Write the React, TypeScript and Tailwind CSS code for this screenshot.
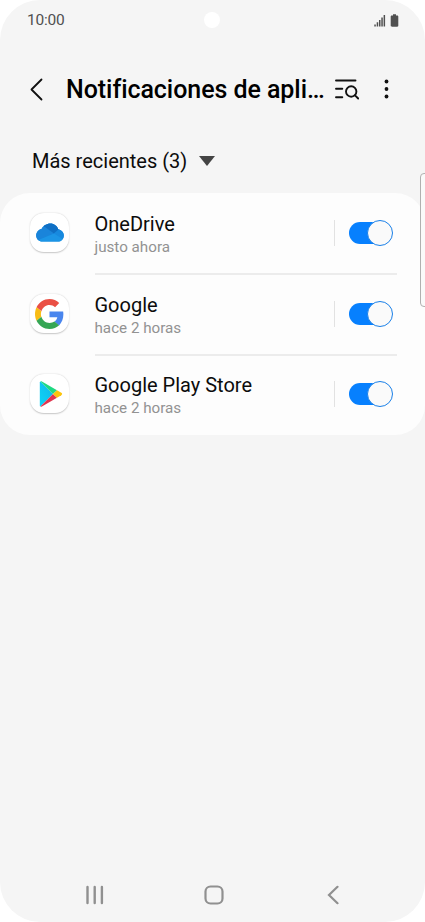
import { useState } from 'react';

interface AppEntry {
  id: string;
  name: string;
  time: string;
  icon: React.ReactNode;
}

function OneDriveIcon() {
  return (
    <svg width="28" height="19" viewBox="0 0 28 19">
      <defs>
        <clipPath id="cloud">
          <path d="M6.300 18.600C2.800 18.600.2 16 .2 12.600.2 9.300 2.500 6.800 5.500 6.100 7 2.600 10.600.4 14.400.4c3.700 0 6.900 2.400 8 6 3 .3 5.400 2.900 5.400 6 0 3.400-2.600 6.200-6 6.200z" />
        </clipPath>
      </defs>
      <g clipPath="url(#cloud)">
        <rect width="28" height="19" fill="#1386dc" />
        <path d="M7 0h17v7l-6.500 4L8 5z" fill="#0f6fc4" />
        <path d="M0 4h9l9 6.500L0 18z" fill="#1a84da" />
        <path d="M17.500 10.800L23 6h6v12z" fill="#1889de" />
        <path d="M1 17.500l17-7 9.500 6V19H1z" fill="#1c95e6" />
      </g>
    </svg>
  );
}

function GoogleIcon() {
  return (
    <svg width="29" height="30" viewBox="0 0 48 48" preserveAspectRatio="none">
      <path fill="#ea5045" d="M24 9.500c3.540 0 6.710 1.220 9.210 3.600l6.850-6.850C35.900 2.380 30.470 0 24 0 14.620 0 6.510 5.380 2.560 13.220l7.980 6.190C12.430 13.720 17.740 9.500 24 9.500z" />
      <path fill="#4a86ee" d="M46.980 24.550c0-1.570-.15-3.090-.38-4.550H24v9.020h12.940c-.58 2.960-2.260 5.480-4.780 7.180l7.730 6c4.510-4.180 7.090-10.360 7.090-17.650z" />
      <path fill="#f8bc15" d="M10.530 28.590c-.48-1.450-.76-2.990-.76-4.590s.27-3.140.76-4.590l-7.980-6.190C.92 16.460 0 20.120 0 24s.92 7.540 2.560 10.780z" />
      <path fill="#36a655" d="M24 48c6.480 0 11.930-2.130 15.890-5.810l-7.730-6c-2.150 1.450-4.920 2.300-8.160 2.300-6.260 0-11.570-4.220-13.470-9.910l-7.980 6.190C6.510 42.620 14.620 48 24 48z" />
    </svg>
  );
}

function PlayStoreIcon() {
  return (
    <svg width="24" height="26" viewBox="0 0 24 26" className="ml-[3px]">
      <defs>
        <linearGradient id="playBlue" x1="1" y1="0" x2="0" y2="1">
          <stop offset="0" stopColor="#12b5e8" />
          <stop offset="1" stopColor="#0cd5f8" />
        </linearGradient>
      </defs>
      <path d="M1.500.4C1 .6.800 1 .8 1.600v22.800c0 .6.200 1 .6 1.200L14 13z" fill="url(#playBlue)" />
      <path d="M1.500.4c.4-.2.900-.1 1.400.2L18 9.200 14 13z" fill="#1fd983" />
      <path d="M1.400 25.600c.4.200.900.1 1.500-.2L18 16.800 14 13z" fill="#e0354f" />
      <path d="M18 9.200l4.300 2.600c1.100.7 1.100 1.700 0 2.400L18 16.800 14 13z" fill="#fcc40c" />
    </svg>
  );
}

const apps: AppEntry[] = [
  { id: 'onedrive', name: 'OneDrive', time: 'justo ahora', icon: <OneDriveIcon /> },
  { id: 'google', name: 'Google', time: 'hace 2 horas', icon: <GoogleIcon /> },
  { id: 'play', name: 'Google Play Store', time: 'hace 2 horas', icon: <PlayStoreIcon /> },
];

function Toggle({ checked, onChange }: { checked: boolean; onChange: () => void }) {
  return (
    <button
      type="button"
      role="switch"
      aria-checked={checked}
      onClick={onChange}
      className="flex h-[26px] w-11 items-center"
    >
      <span
        className={`flex h-[22px] w-[43px] items-center rounded-full ${
          checked ? 'justify-end bg-[#0780fe]' : 'justify-start bg-[#b5b5b5]'
        }`}
      >
        <span
          className={`-mr-px h-[26px] w-[26px] shrink-0 rounded-full border bg-[#fafafa] ${
            checked ? 'border-[#1a80e8]' : 'border-[#b5b5b5]'
          }`}
        />
      </span>
    </button>
  );
}

function StatusBar() {
  return (
    <div className="relative flex h-10 items-center justify-between pl-[27px] pr-[25px] text-[#505050]">
      <span className="pt-[2px] text-[15.500px] leading-none tracking-[-0.2px]">10:00</span>
      <span className="absolute left-[204px] top-3 h-4 w-4 rounded-full bg-white" />
      <svg width="26" height="13" viewBox="0 0 26 13" fill="currentColor">
        <path d="M.3 10.500h1.500V12.500H.3zM2.700 8.300h1.500v4.200H2.700zM5 6h1.500v6.500H5zM7.300 3.500h1.500v9H7.300zM9.600 1h1.500v11.500H9.600z" />
        <path d="M19 .2h3v1.400h1.200c.7 0 1.100.4 1.100 1.100v8.900c0 .8-.4 1.200-1.200 1.200h-5.200c-.8 0-1.200-.4-1.200-1.200V2.700c0-.7.400-1.100 1.100-1.100H19z" />
      </svg>
    </div>
  );
}

export default function App() {
  const [enabled, setEnabled] = useState<Record<string, boolean>>({
    onedrive: true,
    google: true,
    play: true,
  });

  const toggle = (id: string) => {
    setEnabled({ ...enabled, [id]: !enabled[id] });
  };

  return (
    <div className="h-[922px] w-[425px] bg-white font-[Roboto,sans-serif]">
      <div className="relative flex h-full flex-col overflow-hidden rounded-[40px] bg-[#f5f5f5]">
        <StatusBar />

        <header className="mt-[29px] flex h-10 items-center pl-[30px]">
          <button type="button" aria-label="Atrás" className="w-9">
            <svg width="14" height="23" viewBox="0 0 14 23" fill="none" stroke="#111" strokeWidth="1.800" strokeLinecap="round" strokeLinejoin="round">
              <path d="M11.500 1.500L1.500 11.500l10 10" />
            </svg>
          </button>
          <h1 className="w-[268px] whitespace-nowrap pt-[2px] text-[25px] font-medium leading-8 tracking-[-0.06px] text-black">
            Notificaciones de apli…
          </h1>
          <button type="button" aria-label="Buscar">
            <svg width="25" height="21" viewBox="0 0 25 21" fill="none" stroke="#111" strokeWidth="1.900" strokeLinecap="round">
              <path d="M2 1.500h19.500M2 9.800h6.300M2 18.200h6.300" />
              <circle cx="17.200" cy="12.500" r="5.200" />
              <path d="M21 16.300l3.200 3.200" />
            </svg>
          </button>
          <button type="button" aria-label="Más opciones" className="ml-[25px]">
            <svg width="5" height="20" viewBox="0 0 5 20" fill="#111">
              <circle cx="2.500" cy="2.500" r="1.900" />
              <circle cx="2.500" cy="10" r="1.900" />
              <circle cx="2.500" cy="17.500" r="1.900" />
            </svg>
          </button>
        </header>

        <button type="button" className="mt-8 flex h-10 items-center gap-3 pl-8 text-left">
          <span className="text-[20px] leading-6 text-[#0c0c0c]">Más recientes (3)</span>
          <svg width="16" height="10" viewBox="0 0 16 10" fill="#444">
            <path d="M0 0h16L8 10z" />
          </svg>
        </button>

        <main className="mt-3 flex h-[242px] flex-col rounded-[30px] bg-[#fdfdfd] pl-[30px] pr-7 pt-px">
          {apps.map((app, index) => (
            <div key={app.id} className="flex h-[81px] items-stretch last:h-[79px]">
              <div className="flex w-[64.500px] items-center pb-1">
                <div className="flex h-[39px] w-[39px] items-center justify-center rounded-[14px] bg-white shadow-[0_0.500px_1.500px_rgba(0,0,0,0.22)]">
                  {app.icon}
                </div>
              </div>
              <div
                className={`flex flex-1 items-center border-[#ececec] pr-1 ${
                  index < apps.length - 1 ? 'border-b-2 pb-[2px]' : 'pb-[3px]'
                }`}
              >
                <div className="flex-1 pt-1">
                  <p className="text-[20px] leading-6 text-[#0c0c0c]">{app.name}</p>
                  <p className="text-[15.200px] leading-[22px] text-[#929292]">{app.time}</p>
                </div>
                <div className="mr-[14px] h-[26px] w-px bg-[#e2e2e2]" />
                <Toggle checked={enabled[app.id]} onChange={() => toggle(app.id)} />
              </div>
            </div>
          ))}
        </main>

        <nav className="mt-auto flex h-[54px] items-center pl-[86px]">
          <svg width="18" height="20" viewBox="0 0 18 20" stroke="#909090" strokeWidth="2.400" strokeLinecap="round">
            <path d="M1.500 2v16M8.700 2v16M15.900 2v16" />
          </svg>
          <svg className="ml-[99.500px]" width="20" height="20" viewBox="0 0 20 20" fill="none" stroke="#909090" strokeWidth="2.200">
            <rect x="1.500" y="1.500" width="17" height="17" rx="5" />
          </svg>
          <svg className="ml-[103px]" width="12" height="20" viewBox="0 0 12 20" fill="none" stroke="#909090" strokeWidth="2.200" strokeLinecap="round">
            <path d="M10.500 1.800L2 10l8.500 8.200" />
          </svg>
        </nav>

        {/* edge panel handle */}
        <div className="absolute -right-1 top-[173px] h-[134px] w-[9px] rounded-[4px] border border-[#b0b0b0] bg-[#fafafa]" />
      </div>
    </div>
  );
}
